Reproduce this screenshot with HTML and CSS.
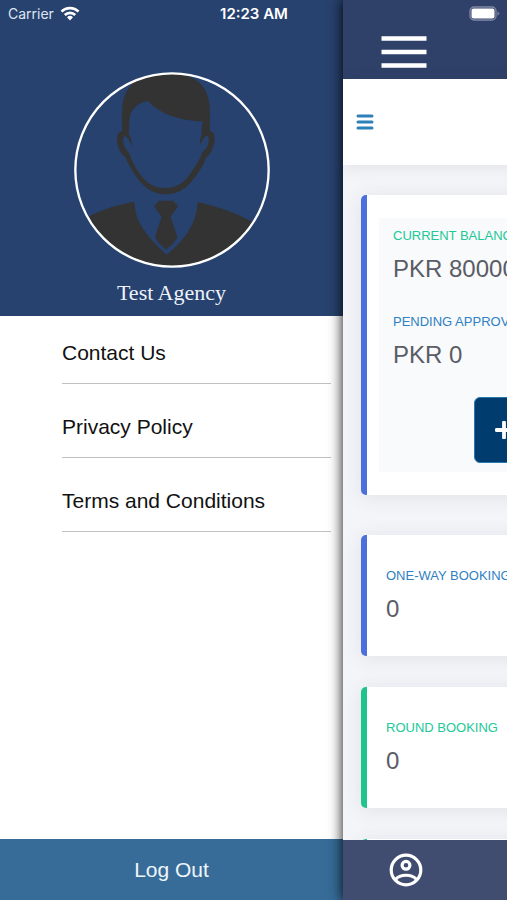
FILE: index.html
```
<!DOCTYPE html>
<html lang="en">
<head>
<meta charset="utf-8">
<meta name="viewport" content="width=device-width, initial-scale=1">
<title>Agency</title>
<link rel="stylesheet" href="styles.css">
</head>
<body>
<div class="status">
  <span class="carrier">Carrier
    <svg width="20" height="15" viewBox="0 0 20 15" aria-hidden="true"><g fill="none" stroke="#fff" stroke-width="2.7"><path d="M1.500 5.600a12 12 0 0 1 17 0"/><path d="M4.800 9a7.400 7.400 0 0 1 10.400 0"/></g><path d="M10 14.400l-3-3.100a4.300 4.300 0 0 1 6 0z" fill="#fff"/></svg>
  </span>
  <span class="time">12:23 AM</span>
  <svg class="battery" width="31" height="15" viewBox="0 0 31 15" aria-hidden="true"><rect x="1" y="1" width="26" height="13" rx="4" fill="none" stroke="#8188a6" stroke-width="1.300"/><rect x="2.500" y="2.500" width="23" height="10" rx="2" fill="#fff"/><path d="M28.500 5l2 2.500-2 2.500z" fill="#8188a6"/></svg>
</div>
<div class="app">
  <aside class="drawer">
    <header class="profile">
      <svg class="avatar" viewBox="42 37 588 588" role="img" aria-label="Profile picture">
        <defs><clipPath id="round"><circle cx="336" cy="331" r="288"/></clipPath></defs>
        <g clip-path="url(#round)" fill="#333">
          <path fill-rule="evenodd" d="M187 214C184 150 184 108 212 78C242 44 290 38 340 40C400 44 440 75 447 125C451 155 450 186 449 214C462 216 466 228 463 246C459 266 452 284 438 294C432 310 425 325 412 342C386 382 358 404 316 404C276 404 248 380 228 350C212 326 202 308 196 292C180 282 173 262 171 240C170 226 176 216 187 214ZM206 222C212 232 216 246 217 262C211 246 204 234 196 228C188 230 188 244 193 259C197 270 205 276 209 284C218 310 228 328 242 346C264 376 286 385 316 385C352 385 376 368 396 334C410 314 419 300 426 280C430 272 439 270 443 257C448 242 449 230 439 228C430 234 424 246 419 258C419 244 421 232 426 222C422 208 426 196 428 185C370 184 304 168 264 124C236 128 214 148 209 174Z"/>
          <path d="M60 486C110 452 165 438 222 426C226 440 225 455 232 474C248 515 280 548 320 585C360 552 392 514 404 474C411 456 411 440 413 427C475 442 540 462 600 500V640H60Z"/>
          <path d="M297 423H340L354 440L332 471L352 531C346 548 332 558 318 570C306 558 290 548 285 531L305 471L282 440Z"/>
        </g>
        <circle cx="336" cy="331" r="290" fill="none" stroke="#fff" stroke-width="7"/>
      </svg>
      <h1 class="name">Test Agency</h1>
    </header>
    <nav>
      <ul class="links">
        <li><a href="#contact">Contact Us</a></li>
        <li><a href="#privacy">Privacy Policy</a></li>
        <li><a href="#terms">Terms and Conditions</a></li>
      </ul>
    </nav>
    <button class="logout" type="button">Log Out</button>
  </aside>
  <div class="panel">
    <div class="page">
      <header class="appbar">
        <button class="icon-btn" type="button" aria-label="Close menu"><svg width="46" height="32" viewBox="0 0 46 32"><path d="M0.500 2.500h45M0.500 16h45M0.500 29.500h45" stroke="#fff" stroke-width="4.600"/></svg></button>
      </header>
      <div class="toolbar">
        <button class="icon-btn" type="button" aria-label="Dashboard menu"><svg width="18" height="16" viewBox="0 0 18 16"><path d="M2 2h14M2 8h14M2 14h14" stroke="#2e80b8" stroke-width="3" stroke-linecap="round"/></svg></button>
      </div>
      <main class="content">
        <section class="card balance">
          <div class="inset">
            <h2 class="label green">CURRENT BALANCE</h2>
            <p class="value">PKR 80000</p>
            <h2 class="label pending">PENDING APPROVAL</h2>
            <p class="value">PKR 0</p>
            <button class="add" type="button" aria-label="Add"><svg width="18" height="18" viewBox="0 0 18 18"><path d="M9 1.500v15M1.500 9h15" stroke="#fff" stroke-width="3.800" stroke-linecap="round"/></svg></button>
          </div>
        </section>
        <section class="card">
          <h2 class="label">ONE-WAY BOOKING</h2>
          <p class="value">0</p>
        </section>
        <section class="card success">
          <h2 class="label green">ROUND BOOKING</h2>
          <p class="value">0</p>
        </section>
        <section class="card success"></section>
      </main>
      <footer class="tabs">
        <button class="icon-btn" type="button" aria-label="Account"><svg width="34" height="34" viewBox="0 0 34 34" fill="none" stroke="#fff" stroke-width="3.200"><circle cx="17" cy="17" r="14.800"/><circle cx="17" cy="12.300" r="3.900"/><path d="M6.500 26.500C11 20.800 23 20.800 27.500 26.500"/></svg></button>
      </footer>
    </div>
  </div>
</div>
</body>
</html>
```
FILE: styles.css
```
* { box-sizing: border-box; margin: 0; padding: 0; }
body { font-family: "Liberation Sans", Arial, sans-serif; background: #fff; }
button { font: inherit; border: 0; cursor: pointer; }
svg { display: block; }

.status {
  position: absolute; z-index: 2; top: 0; left: 0; right: 0;
  display: grid; grid-template-columns: 1fr auto 1fr; align-items: center;
  height: 27px; padding: 0 7px 0 8px;
  font-family: Inter, sans-serif; font-size: 14px; color: #fff;
}
.carrier { display: flex; align-items: center; gap: 6px; color: #dfe6f2; }
.time { font-size: 15px; font-weight: 600; }
.battery { justify-self: end; }

.app { display: flex; height: 100vh; overflow: hidden; }

.drawer { flex: 1; display: flex; flex-direction: column; min-width: 0; }
.profile {
  display: flex; flex-direction: column; align-items: center; gap: 11px;
  padding: 72px 0 9px; background: #27426e;
}
.avatar { width: 196px; height: 196px; }
.name { font: 22px/28px "Liberation Serif", "Times New Roman", serif; color: #eef3fb; }
.links { display: flex; flex-direction: column; gap: 27px; padding: 21px 12px 0 62px; list-style: none; }
.links a {
  display: block; padding-bottom: 14px; border-bottom: 1px solid #c0c0c0;
  font-size: 21px; line-height: 32px; color: #111; text-decoration: none;
}
.logout { margin-top: auto; height: 61px; background: #376c98; color: #eef5fb; font-size: 21px; }

.panel {
  flex: 0 0 164px; position: relative; z-index: 1; overflow: hidden;
  box-shadow: 0 0 12px 1px rgba(0, 0, 0, .85);
}
.page { display: flex; flex-direction: column; width: 100vw; height: 100%; background: #f4f5f9; }
.icon-btn { background: none; }
.appbar { flex: none; height: 79px; padding: 36px 38px 0; background: #2f4069; }
.toolbar {
  flex: none; display: flex; align-items: center; height: 86px; padding: 0 13px;
  background: #fff; box-shadow: 0 2px 16px rgba(58, 59, 69, .1);
}
.content {
  flex: 1; min-height: 0; overflow: hidden;
  display: flex; flex-direction: column; gap: 31px; padding: 30px 18px 0;
}
.card {
  flex: none; min-height: 121px; padding: 30px 19px 29px;
  background: #fff; border-left: 6px solid #4c6fdc; border-radius: 5px;
  box-shadow: 0 2px 20px rgba(58, 59, 69, .1);
}
.balance { margin-bottom: 9px; padding: 23px 12px; }
.success { border-left-color: #1fc48c; }
.inset { padding: 7px 14px 9px; background: #f8fafb; }
.label { font-size: 13px; font-weight: 400; line-height: 22px; color: #2f80c3; white-space: nowrap; }
.green { color: #20c997; }
.pending { margin-top: 26px; }
.value { margin-top: 6px; font-size: 24px; line-height: 32px; color: #5a5c66; white-space: nowrap; }
.add {
  display: flex; align-items: center; width: 252px; height: 66px;
  margin: 26px auto 0; padding: 0 20px;
  background: #003d6e; border: 1px solid #2878ac; border-radius: 6px;
}
.tabs { flex: none; display: flex; align-items: center; height: 60px; padding: 0 46px; background: #414d70; }
```
